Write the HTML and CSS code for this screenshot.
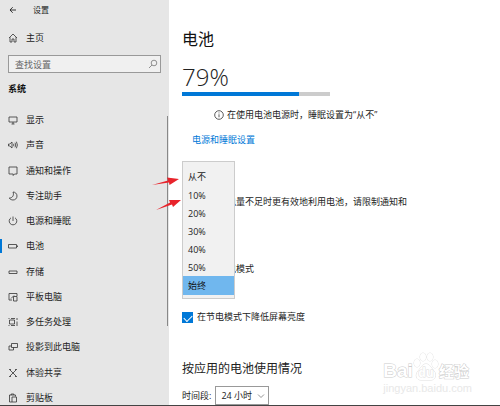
FILE: index.html
```html
<!DOCTYPE html>
<html lang="zh-CN">

<head>
    <meta charset="UTF-8">
    <meta name="viewport" content="width=device-width, initial-scale=1.0">
    <title>设置</title>
    <link rel="stylesheet" href="styles.css">
</head>

<body>

    <div class="settings">
        <aside class="sidebar">
            <div class="sidebar__title">
                <button class="sidebar__back" aria-label="返回">
                    <svg width="8" height="8" viewBox="0 0 8 8"><path d="M7 4H1M3.7 1.2L1 4l2.7 2.8"/></svg>
                </button>
                <span>设置</span>
            </div>
            <a class="sidebar__link sidebar__home" href="#">
                <svg class="icon" viewBox="0 0 10 10"><path d="M1 5l4-4 4 4M2 4.2V9h2V6h2v3h2V4.2"/></svg>
                主页
            </a>
            <div class="search">
                <input class="search__input" type="text" placeholder="查找设置" aria-label="查找设置">
                <svg class="icon search__icon" viewBox="0 0 10 10"><circle cx="6" cy="4" r="2.8"/><path d="M4 6L1 9"/></svg>
            </div>
            <h3 class="sidebar__heading">系统</h3>
            <nav class="sidebar__nav">
                <a class="sidebar__link" href="#">
                    <svg class="icon" viewBox="0 0 10 10"><path d="M1 2h8v5H1zM3.5 9h3M5 7v2"/></svg>
                    显示
                </a>
                <a class="sidebar__link" href="#">
                    <svg class="icon" viewBox="0 0 10 10"><path d="M.5 4v2h1.300L4 8V2L1.800 4zM5.500 3.800q.8 1.200 0 2.400M7 2.700q1.500 2.300 0 4.600M8.400 1.700q2 3.300 0 6.600"/></svg>
                    声音
                </a>
                <a class="sidebar__link" href="#">
                    <svg class="icon" viewBox="0 0 10 10"><path d="M1 1h8v7H6.500L5.200 9.500V8H1z"/></svg>
                    通知和操作
                </a>
                <a class="sidebar__link" href="#">
                    <svg class="icon" viewBox="0 0 10 10"><path d="M5 1c2 0 4 1.500 4 4S7.200 9 5 9C3.400 9 2 8.200 1.200 7 4.500 7.200 6.400 4 5 1z"/></svg>
                    专注助手
                </a>
                <a class="sidebar__link" href="#">
                    <svg class="icon" viewBox="0 0 10 10"><path d="M5 .5V5M3 1.800a3.800 3.800 0 1 0 4 0"/></svg>
                    电源和睡眠
                </a>
                <a class="sidebar__link sidebar__link--active" href="#">
                    <svg class="icon" viewBox="0 0 10 10"><path d="M.5 3.500h8v3.500h-8zM9.500 4.500v1.500"/></svg>
                    电池
                </a>
                <a class="sidebar__link" href="#">
                    <svg class="icon" viewBox="0 0 10 10"><path d="M1 4h8v2.500H1z"/></svg>
                    存储
                </a>
                <a class="sidebar__link" href="#">
                    <svg class="icon" viewBox="0 0 10 10"><path d="M4 8H1V1.500h8V4M5.500 4.500h3.500V9H5.500zM3 6.500L6 3.500"/></svg>
                    平板电脑
                </a>
                <a class="sidebar__link" href="#">
                    <svg class="icon" viewBox="0 0 10 10"><path d="M1.500 3h5v4h-5zM.5 1.500h1M3 1.500h4M.5 8.500h1M3 8.500h4M9 1v2M9 4.500v4.500"/></svg>
                    多任务处理
                </a>
                <a class="sidebar__link" href="#">
                    <svg class="icon" viewBox="0 0 10 10"><path d="M3.500 5.500v-4h6v4zM3.500 4H1v4h4.500V5.500"/></svg>
                    投影到此电脑
                </a>
                <a class="sidebar__link" href="#">
                    <svg class="icon" viewBox="0 0 10 10"><path d="M2 2l6 6M8 2L2 8M1 1.500h2M7 1.500h2M1 8.500h2M7 8.500h2"/></svg>
                    体验共享
                </a>
                <a class="sidebar__link" href="#">
                    <svg class="icon" viewBox="0 0 10 10"><path d="M4 9H1.500V2h6v1.500M3.200 2V1h2.600v1M4 4h4.500v5H4z"/></svg>
                    剪贴板
                </a>
            </nav>
            <div class="sidebar__scrollbar"></div>
        </aside>

        <main class="content">
            <h1 class="content__title">电池</h1>
            <div class="battery__level">79%</div>
            <div class="battery__bar">
                <div class="battery__fill" style="width: 79%"></div>
            </div>
            <p class="note">
                <svg class="icon" viewBox="0 0 10 10"><circle cx="5" cy="5" r="4.300"/><path d="M5 4.300v3M5 2.500v.9"/></svg>
                在使用电池电源时，睡眠设置为“从不”
            </p>
            <a class="content__link" href="#">电源和睡眠设置</a>

            <section class="saver">
                <p class="saver__text">若要在电池电量不足时更有效地利用电池，请限制通知和后台活动。</p>
                <label class="saver__label" for="threshold">立即启用节电模式</label>
                <select class="saver__menu" id="threshold" size="7">
                    <option class="saver__word">从不</option>
                    <option>10%</option>
                    <option>20%</option>
                    <option>30%</option>
                    <option>40%</option>
                    <option>50%</option>
                    <option class="saver__word" selected>始终</option>
                </select>
                <svg class="saver__arrows" width="32" height="36" viewBox="0 0 32 36">
                    <path d="M1 10L17 5.500 16 2.500 28 4 18.500 10 18 7.500z"/>
                    <path d="M5 35L19 27.500 18 25 30 25 22 32 21 29.500z"/>
                </svg>
            </section>

            <label class="check">
                <input class="check__box" type="checkbox" checked>
                在节电模式下降低屏幕亮度
            </label>

            <h2 class="content__subtitle">按应用的电池使用情况</h2>
            <div class="period">
                <label for="period">时间段:</label>
                <div class="period__field">
                    <select class="period__select" id="period">
                        <option>24 小时</option>
                        <option>1 周</option>
                    </select>
                    <svg class="icon period__arrow" viewBox="0 0 10 10"><path d="M2 3.500l3 3 3-3"/></svg>
                </div>
            </div>
        </main>

        <div class="watermark">
            <div class="watermark__brand">
                <span class="watermark__bai">Bai</span>
                <svg class="watermark__paw" width="26" height="29" viewBox="0 0 26 29">
                    <ellipse cx="4" cy="11" rx="3" ry="4"/>
                    <ellipse cx="10" cy="5" rx="3" ry="4"/>
                    <ellipse cx="17" cy="5" rx="3" ry="4"/>
                    <ellipse cx="22" cy="12" rx="3" ry="4"/>
                    <path d="M13 12c4 0 5 4 8 7 3 4 1 9-3 9H8c-5 0-6-5-3-9 3-3 4-7 8-7z"/>
                    <text x="13" y="25" text-anchor="middle">du</text>
                </svg>
                <span class="watermark__name">经验</span>
            </div>
            <div class="watermark__url">jingyan.baidu.com</div>
        </div>
    </div>

</body>

</html>
```
FILE: styles.css
```css
* {
    box-sizing: border-box;
}

body {
    margin: 0;
    background-color: #fff;
    color: #222;
    font-family: "Open Sans", "Noto Sans CJK SC", sans-serif;
    font-size: 9px;
    line-height: 14px;
}

h1, h2, h3, p {
    margin: 0;
    font-weight: normal;
}

a {
    color: inherit;
    text-decoration: none;
}

input, select, button {
    font: inherit;
    color: inherit;
}

.settings {
    position: relative;
    display: flex;
    height: 100vh;
    overflow: hidden;
    border-bottom: 1px solid #444;
}

.icon {
    width: 10px;
    height: 10px;
    flex: none;
    fill: none;
    stroke: #333;
    stroke-width: .8;
}

/* sidebar */
.sidebar {
    position: relative;
    flex: none;
    width: 169px;
    display: flex;
    flex-direction: column;
    padding-top: 3px;
    background-color: #e6e6e6;
}

.sidebar__title {
    display: flex;
    align-items: center;
    gap: 16px;
    padding-left: 9px;
    font-size: 8px;
}

.sidebar__back {
    display: flex;
    padding: 0;
    border: 0;
    background: none;
}

.sidebar__back svg {
    fill: none;
    stroke: #222;
    stroke-width: .9;
}

.sidebar__link {
    display: flex;
    align-items: center;
    gap: 8px;
    padding-left: 8px;
}

.sidebar__home {
    margin-top: 14px;
}

.search {
    position: relative;
    margin: 10px 8px 0;
}

.search__input {
    display: block;
    width: 100%;
    height: 18px;
    padding: 0 20px 0 6px;
    border: 1px solid #999;
    border-radius: 0;
    background-color: #f0f0f0;
    outline: none;
}

.search__input::placeholder {
    color: #666;
}

.search__icon {
    position: absolute;
    top: 4px;
    right: 3px;
    stroke: #777;
}

.sidebar__heading {
    margin-top: 9px;
    padding-left: 8px;
    font-size: 9px;
    font-weight: bold;
    color: #111;
}

.sidebar__nav {
    flex: 1;
    display: flex;
    flex-direction: column;
    justify-content: space-between;
    margin-top: 17px;
}

.sidebar__link--active {
    padding-left: 6px;
    border-left: 2px solid #0078d7;
}

.sidebar__scrollbar {
    position: absolute;
    top: 116px;
    right: 1px;
    width: 1px;
    height: 210px;
    background-color: #888;
}

/* content */
.content {
    flex: 1;
    padding: 27px 13px 0;
}

.content__title {
    font-size: 16px;
    line-height: 24px;
    color: #111;
}

.battery__level {
    margin-top: 11px;
    font-size: 24px;
    font-weight: 300;
    line-height: 30px;
}

.battery__bar {
    max-width: 148px;
    height: 4px;
    background-color: #ccc;
}

.battery__fill {
    height: 100%;
    background-color: #0078d7;
}

.note {
    display: flex;
    align-items: center;
    gap: 3px;
    margin: 12px 0 11px;
    padding-left: 32px;
}

.content__link {
    display: block;
    padding-left: 10px;
    color: #0078d7;
}

.saver {
    position: relative;
    margin-top: 14px;
    padding-top: 34px;
}

.saver__text {
    max-width: 230px;
}

.saver__label {
    display: block;
    margin-top: 39px;
}

.saver__menu {
    position: absolute;
    top: 0;
    left: 0;
    width: 53px;
    height: 138px;
    padding: 5px 0 0;
    border: 1px solid #ccc;
    border-radius: 0;
    background-color: #f1f1f1;
    overflow: hidden;
    outline: none;
}

.saver__menu option {
    min-height: 18px;
    padding: 3px 5px 0;
    line-height: 14px;
}

.saver__menu .saver__word {
    min-height: 19px;
}

.saver__menu option:checked {
    background: #70b7ee linear-gradient(#70b7ee, #70b7ee);
    color: #111;
}

.saver__arrows {
    position: absolute;
    top: 14px;
    left: -31px;
    fill: #e8232b;
}

.check {
    display: flex;
    align-items: center;
    gap: 4px;
    margin-top: 34px;
}

.check__box {
    appearance: none;
    width: 11px;
    height: 11px;
    margin: 0;
    background-color: #0078d7;
}

.check__box:checked::before {
    content: "";
    display: block;
    width: 7px;
    height: 4px;
    margin: 3px 2px;
    border: solid #fff;
    border-width: 0 0 1px 1px;
    transform: rotate(-45deg);
}

.content__subtitle {
    margin-top: 36px;
    font-size: 12px;
    line-height: 18px;
}

.period {
    display: flex;
    align-items: center;
    gap: 4px;
    margin-top: 8px;
}

.period__field {
    position: relative;
}

.period__select {
    appearance: none;
    display: block;
    width: 54px;
    height: 19px;
    padding: 0 5px;
    border: 1px solid #999;
    border-radius: 0;
    background-color: #fff;
}

.period__arrow {
    position: absolute;
    top: 5px;
    right: 3px;
    stroke: #777;
    pointer-events: none;
}

/* watermark */
.watermark {
    position: absolute;
    right: 28px;
    bottom: 10px;
    color: #fff;
    -webkit-text-stroke: 1px #ccc;
    paint-order: stroke;
    pointer-events: none;
}

.watermark__brand {
    display: flex;
    align-items: flex-end;
    line-height: 20px;
}

.watermark__bai {
    font-family: "Liberation Sans", sans-serif;
    font-size: 19px;
    font-weight: bold;
}

.watermark__paw {
    fill: #fff;
    stroke: #ddd;
    stroke-width: 1;
}

.watermark__paw text {
    font-size: 12px;
    font-weight: bold;
}

.watermark__name {
    font-size: 15px;
    font-weight: bold;
}

.watermark__url {
    font-family: "Liberation Sans", sans-serif;
    font-size: 11px;
    line-height: 14px;
    color: #e8e8e8;
    -webkit-text-stroke: 0;
}
```
